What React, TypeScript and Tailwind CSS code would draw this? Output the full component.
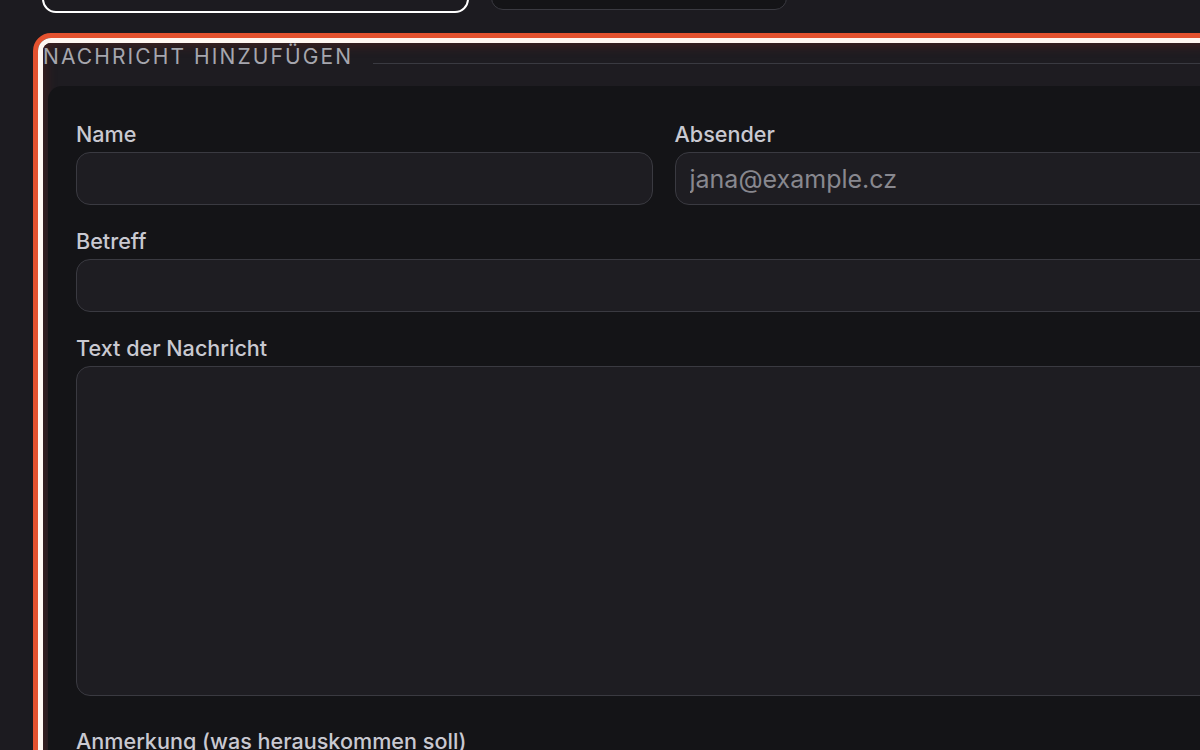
import React from "react";

function Field({ label, placeholder, className }: { label: string; placeholder?: string; className?: string }) {
  return (
    <label className={"flex flex-col gap-[4px] " + (className ?? "")}>
      <span className="text-[21.6px] leading-[28px] font-medium text-[#c9c9d1]">{label}</span>
      <input
        placeholder={placeholder}
        className="h-[53px] rounded-[14px] border border-[#3a3a41] bg-[#1e1d22] px-[14px] text-[25px] text-[#d4d4d8] placeholder:text-[#88888f] outline-none"
      />
    </label>
  );
}

export default function App() {
  return (
    <div className="w-[1200px] h-[750px] overflow-hidden bg-[#1c1b20] font-['Inter','Noto_Sans',sans-serif]">
      <div className="w-[1400px] pl-[42px]">
        {/* top buttons, cut off by the viewport */}
        <div className="flex items-start gap-[22px] -mt-[30px]">
          <div className="w-[427px] h-[43px] rounded-[14px] border-2 border-white" />
          <div className="w-[296px] h-[40px] rounded-[12px] border border-[#3a3a41] bg-[#141417]" />
        </div>

        {/* focused fieldset */}
        <div className="-ml-[9px] mt-[20px] w-[1256px] rounded-[18px] border-[5px] border-[#e4522f]">
          <div className="rounded-[13px] border-[5px] border-[#fff7f2]">
            <div className="rounded-[8px] bg-[#1e1c21] shadow-[inset_0_0_14px_rgba(140,40,30,0.45)] pb-[40px]">
              {/* legend */}
              <div className="flex items-center h-[28px]">
                <span className="text-[21px] leading-[28px] tracking-[0.1em] text-[#a6a6ae]">
                  NACHRICHT HINZUFÜGEN
                </span>
                <div className="flex-1 h-px bg-[#3a3a41] ml-[20px] mt-[12px]" />
              </div>

              {/* card */}
              <div className="ml-[5px] mt-[15px] rounded-tl-[14px] bg-[#141417] pt-[34px] pl-[28px] pr-[28px] pb-[40px]">
                <div className="grid grid-cols-2 gap-x-[22px]">
                  <Field label="Name" />
                  <Field label="Absender" placeholder="jana@example.cz" />
                </div>
                <Field label="Betreff" className="mt-[22px]" />
                <label className="flex flex-col gap-[4px] mt-[22px]">
                  <span className="text-[21.6px] leading-[28px] font-medium text-[#c9c9d1]">Text der Nachricht</span>
                  <textarea className="h-[330px] resize-none rounded-[14px] border border-[#3a3a41] bg-[#1e1d22] px-[14px] py-[10px] text-[25px] text-[#d4d4d8] outline-none" />
                </label>
                <label className="flex flex-col gap-[4px] mt-[31px]">
                  <span className="text-[21.6px] leading-[28px] font-medium text-[#c9c9d1]">Anmerkung (was herauskommen soll)</span>
                  <input className="h-[53px] rounded-[14px] border border-[#3a3a41] bg-[#1e1d22] px-[14px] text-[25px] outline-none" />
                </label>
              </div>
            </div>
          </div>
        </div>
      </div>
    </div>
  );
}
